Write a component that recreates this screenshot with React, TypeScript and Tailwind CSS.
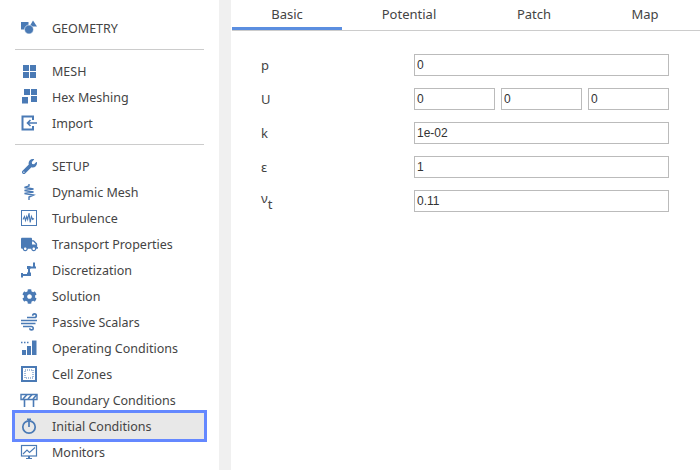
import type { ReactNode } from "react";
import { FaCog, FaTruck, FaWrench } from "react-icons/fa";

const BLUE = "#4a7ab5";

// iconos dibujados a mano, caja de 18x18
function Svg({ children }: { children: ReactNode }) {
  return (
    <svg width="18" height="18" viewBox="0 0 18 18" fill={BLUE} className="shrink-0">
      {children}
    </svg>
  );
}

const icons: Record<string, ReactNode> = {
  geometry: (
    <Svg>
      <rect x="1" y="3" width="7.5" height="7.5" />
      <polygon points="13,1.5 9.5,7.5 17,7.5" />
      <circle cx="9" cy="10.5" r="4.5" stroke="#fff" strokeWidth="0.6" />
    </Svg>
  ),
  mesh: (
    <Svg>
      <rect x="3" y="3" width="6" height="6" />
      <rect x="10" y="3" width="6" height="6" />
      <rect x="3" y="10" width="6" height="6" />
      <rect x="10" y="10" width="6" height="6" />
    </Svg>
  ),
  hex: (
    <Svg>
      <rect x="4" y="1" width="6" height="6" />
      <rect x="11" y="1" width="6" height="6" />
      <rect x="11" y="8" width="6" height="6" />
      <rect x="2" y="9" width="6" height="6.5" />
    </Svg>
  ),
  import: (
    <Svg>
      <path d="M13 6V2.5H2.5v13H13V12" fill="none" stroke={BLUE} strokeWidth="2" />
      <path d="M17 9H8M10.5 6L7.5 9l3 3" fill="none" stroke={BLUE} strokeWidth="1.6" />
    </Svg>
  ),
  dynamic: (
    <Svg>
      <path
        d="M9 1v2L4.5 4.5l9 1.5-9 1.5 9 1.5-9 1.5 9 1.5L9 14v3"
        fill="none"
        stroke={BLUE}
        strokeWidth="1.4"
      />
    </Svg>
  ),
  turbulence: (
    <Svg>
      <rect x="1.5" y="1.5" width="15" height="15" fill="none" stroke={BLUE} strokeWidth="1" />
      <path
        d="M3 10.5l1.5-3 1 4 1.2-4 1 3 1.3-6.5 1.2 9.5 1.2-6 1.2 3 1.4-1"
        fill="none"
        stroke={BLUE}
        strokeWidth="1.1"
      />
    </Svg>
  ),
  discretization: (
    <Svg>
      <path d="M2 14h7V6.5h7M14 1.5v5" fill="none" stroke={BLUE} strokeWidth="2" />
      <rect x="1" y="12" width="2" height="4.5" />
      <rect x="7" y="11.5" width="4" height="3.5" />
      <rect x="7" y="5" width="3.5" height="3" />
    </Svg>
  ),
  wind: (
    <Svg>
      <path
        d="M7 4.5h7.5a1.8 1.8 0 1 0-1.8-1.8M1 7.5h16M1 10.5h14.5M3 13.5h8.5a1.7 1.7 0 1 1-1.7 1.7"
        fill="none"
        stroke={BLUE}
        strokeWidth="1.6"
      />
    </Svg>
  ),
  operating: (
    <Svg>
      <path d="M1 3.5h9" fill="none" stroke={BLUE} strokeWidth="1.5" strokeDasharray="1.5 1.5" />
      <rect x="2" y="11" width="4" height="5" />
      <rect x="7" y="7" width="4" height="9" />
      <rect x="12" y="1.5" width="4.5" height="14.5" />
    </Svg>
  ),
  cell: (
    <Svg>
      <rect x="2" y="2" width="14" height="14" fill="none" stroke={BLUE} strokeWidth="2" />
      <rect x="5" y="5" width="8" height="8" fill="none" stroke={BLUE} strokeWidth="1" strokeDasharray="1 1" />
    </Svg>
  ),
  boundary: (
    <Svg>
      <path d="M1 3.5h16v5H1z" fill="none" stroke={BLUE} strokeWidth="1.4" />
      <path d="M3 8l4-4.5M8 8l4-4.5M13 8l4-4.5" fill="none" stroke={BLUE} strokeWidth="1.6" />
      <path d="M4.5 8v8M13.5 8v8" fill="none" stroke={BLUE} strokeWidth="1.6" />
    </Svg>
  ),
  initial: (
    <Svg>
      <circle cx="9" cy="10" r="6.2" fill="none" stroke={BLUE} strokeWidth="1.7" />
      <path d="M9 3v7" fill="none" stroke={BLUE} strokeWidth="1.7" />
      <rect x="7" y="1.5" width="4" height="1.6" />
    </Svg>
  ),
  monitors: (
    <Svg>
      <rect x="1.5" y="2.5" width="15" height="10.5" fill="none" stroke={BLUE} strokeWidth="1.2" />
      <path d="M3 11l4-4 2.5 2.5L15 4.5" fill="none" stroke={BLUE} strokeWidth="1.1" />
      <path d="M6 16h6v-1H10v-2H8v2H6z" />
    </Svg>
  ),
};

function FaBox({ children }: { children: ReactNode }) {
  return <span className="flex h-[18px] w-[18px] shrink-0 items-center justify-center text-[#4a7ab5]">{children}</span>;
}

function NavRow({ icon, label, active }: { icon: ReactNode; label: string; active?: boolean }) {
  return (
    <div
      className={
        "flex h-[26px] items-center gap-[14px] pl-[5px] " +
        (active ? "bg-[#e8e8e8] outline-[3px] outline-[#6488ff]" : "")
      }
    >
      {icon}
      <span className="whitespace-nowrap pt-[2px] text-[12.5px]">{label}</span>
    </div>
  );
}

function Divider() {
  return <div className="my-[8px] h-px bg-[#cccccc]" />;
}

function Field({ value }: { value: string }) {
  return (
    <input
      readOnly
      defaultValue={value}
      className="h-[22px] w-full min-w-0 border border-[#bbbbbb] bg-white px-[2px] font-['Liberation_Sans',sans-serif] text-[12px] text-[#333333] outline-none"
    />
  );
}

function FormRow({ label, children }: { label: ReactNode; children: ReactNode }) {
  return (
    <div className="flex h-[22px] items-center">
      <div className="w-[153px] shrink-0 pt-[2px]">{label}</div>
      <div className="flex w-[255px] gap-[6px]">{children}</div>
    </div>
  );
}

export default function App() {
  return (
    <div className="flex h-[470px] w-[700px] overflow-hidden bg-white font-['Noto_Sans',sans-serif] text-[13px] text-[#444444]">
      {/* Panel izquierdo */}
      <div className="w-[219px] shrink-0 px-[15px] pt-[15px]">
        <NavRow icon={icons.geometry} label="GEOMETRY" />
        <Divider />
        <NavRow icon={icons.mesh} label="MESH" />
        <NavRow icon={icons.hex} label="Hex Meshing" />
        <NavRow icon={icons.import} label="Import" />
        <Divider />
        <NavRow icon={<FaBox><FaWrench size={15} /></FaBox>} label="SETUP" />
        <NavRow icon={icons.dynamic} label="Dynamic Mesh" />
        <NavRow icon={icons.turbulence} label="Turbulence" />
        <NavRow icon={<FaBox><FaTruck size={17} /></FaBox>} label="Transport Properties" />
        <NavRow icon={icons.discretization} label="Discretization" />
        <NavRow icon={<FaBox><FaCog size={15} /></FaBox>} label="Solution" />
        <NavRow icon={icons.wind} label="Passive Scalars" />
        <NavRow icon={icons.operating} label="Operating Conditions" />
        <NavRow icon={icons.cell} label="Cell Zones" />
        <NavRow icon={icons.boundary} label="Boundary Conditions" />
        <NavRow icon={icons.initial} label="Initial Conditions" active />
        <NavRow icon={icons.monitors} label="Monitors" />
      </div>

      <div className="w-[12px] shrink-0 bg-[#f0f0f0]" />

      {/* Contenido */}
      <div className="min-w-0 flex-1 pl-px">
        <div className="flex h-[31px] border-b border-[#cccccc]">
          <div className="flex h-[30px] w-[110px] items-start justify-center border-b-[3px] border-[#5b8ee0] pt-[5px]">Basic</div>
          <div className="flex w-[134px] justify-center pt-[5px]">Potential</div>
          <div className="flex w-[116px] justify-center pt-[5px]">Patch</div>
          <div className="flex w-[106px] justify-center pt-[5px]">Map</div>
        </div>
        <div className="flex flex-col gap-[12px] pl-[29px] pt-[23px]">
          <FormRow label="p">
            <Field value="0" />
          </FormRow>
          <FormRow label="U">
            <Field value="0" />
            <Field value="0" />
            <Field value="0" />
          </FormRow>
          <FormRow label="k">
            <Field value="1e-02" />
          </FormRow>
          <FormRow label="ε">
            <Field value="1" />
          </FormRow>
          <FormRow
            label={
              <span>
                <span className="relative -top-[3px]">ν</span>
                <span className="relative top-[3px]">t</span>
              </span>
            }
          >
            <Field value="0.11" />
          </FormRow>
        </div>
      </div>
    </div>
  );
}
